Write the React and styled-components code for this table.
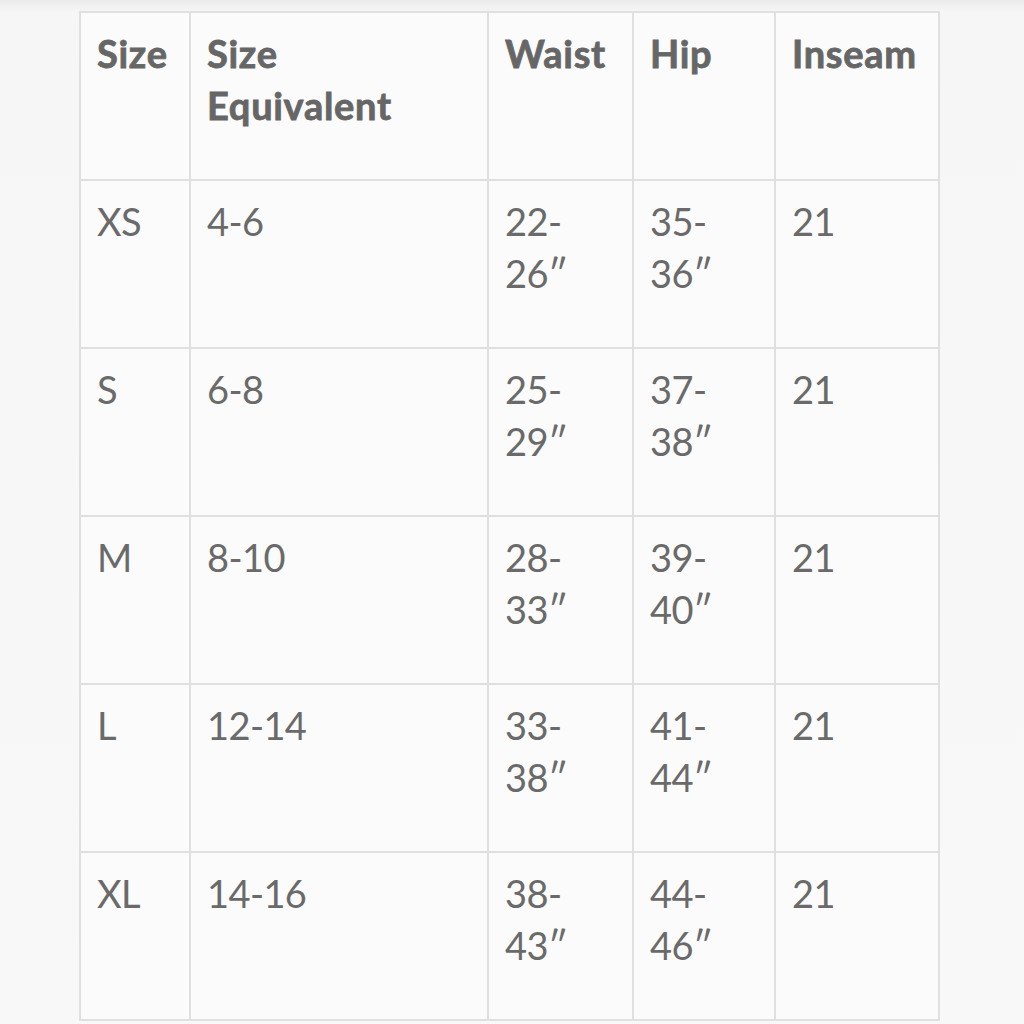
import React from "react";
import styled, { createGlobalStyle } from "styled-components";

const GlobalStyle = createGlobalStyle`
  html, body {
    margin: 0;
    padding: 0;
  }
  body {
    background: linear-gradient(#ebebeb 0px, #f6f6f6 12px, #f8f8f8 100%);
    font-family: Lato, "Open Sans", sans-serif;
    overflow: hidden;
  }
`;

const Page = styled.div`
  width: 1024px;
  height: 1024px;
  padding: 11px 0 0 79px;
  box-sizing: border-box;
`;

const Grid = styled.div`
  display: grid;
  grid-template-columns: 110px 298px 145px 142px 164px;
  grid-auto-rows: 168px;
  width: max-content;
  border-top: 2px solid #e0e0e0;
  border-left: 2px solid #e0e0e0;
  background: #fbfbfb;
`;

const Cell = styled.div`
  box-sizing: border-box;
  border-right: 2px solid #e0e0e0;
  border-bottom: 2px solid #e0e0e0;
  padding: 14px 6px 0 16px;
  font-size: 38px;
  line-height: 52px;
  font-weight: ${(p) => (p.$head ? 700 : 400)};
  color: ${(p) => (p.$head ? "#666666" : "#6a6a6a")};
  white-space: pre-line;
  letter-spacing: ${(p) => (p.$head ? "0.7px" : "-0.6px")};
  -webkit-text-stroke: ${(p) => (p.$head ? "0.8px #666666" : "0")};
`;

const headers = ["Size", "Size\nEquivalent", "Waist", "Hip", "Inseam"];

const rows = [
  ["XS", "4-6", "22-\n26″", "35-\n36″", "21"],
  ["S", "6-8", "25-\n29″", "37-\n38″", "21"],
  ["M", "8-10", "28-\n33″", "39-\n40″", "21"],
  ["L", "12-14", "33-\n38″", "41-\n44″", "21"],
  ["XL", "14-16", "38-\n43″", "44-\n46″", "21"],
];

export default function App() {
  return (
    <Page>
      <GlobalStyle />
      <Grid>
        {headers.map((h) => (
          <Cell key={h} $head>
            {h}
          </Cell>
        ))}
        {rows.map((row) =>
          row.map((v, i) => <Cell key={row[0] + i}>{v}</Cell>)
        )}
      </Grid>
    </Page>
  );
}
